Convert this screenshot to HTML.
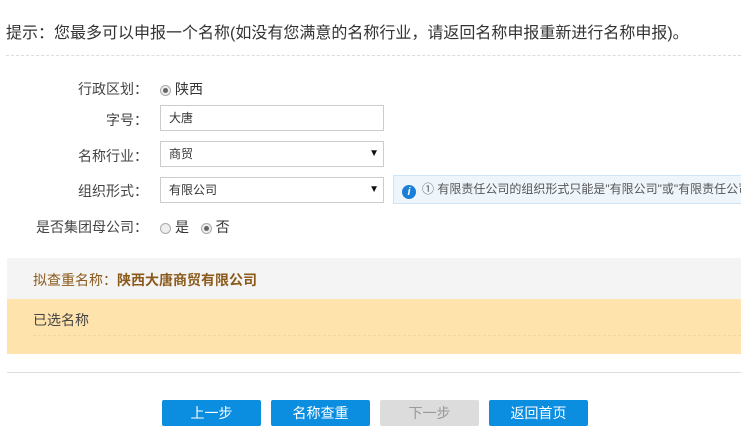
<!DOCTYPE html>
<html><head><meta charset="utf-8"><style>
body{margin:0;width:741px;height:447px;background:#fff;font-family:"Liberation Sans","Noto Sans CJK SC",sans-serif;color:#333;position:relative;overflow:hidden}
.a{position:absolute}
.lbl{position:absolute;right:593px;font-size:14px;color:#444;white-space:nowrap}
.box{position:absolute;left:160px;width:222px;height:24px;border:1px solid #ccc;background:#fff;font-size:12px;line-height:24px;padding-left:0}
.box .t{position:absolute;left:8px}
.arr{position:absolute;right:4px;top:0;font-size:10px;color:#111}
.rad{display:inline-block;width:9px;height:9px;border:1px solid #aaa;border-radius:50%;background:#eee;vertical-align:middle;position:relative;margin-right:4px}
.rad.on:after{content:"";position:absolute;left:2px;top:2px;width:5px;height:5px;border-radius:50%;background:#666}
.btn{position:absolute;top:400px;width:99px;height:26px;background:#0b8ee0;color:#fff;font-size:14px;text-align:center;line-height:26px;border-radius:2px}
</style></head><body>
<div class="a" style="left:6px;top:19px;font-size:16px;color:#333;white-space:nowrap">提示：您最多可以申报一个名称(如没有您满意的名称行业，请返回名称申报重新进行名称申报)。</div>
<div class="a" style="left:6px;top:55px;width:735px;border-top:1px dashed #ddd"></div>

<div class="lbl" style="top:79px">行政区划：</div>
<div class="a" style="left:160px;top:79px;font-size:14px"><span class="rad on"></span>陕西</div>
<div class="lbl" style="top:110px">字号：</div>
<div class="box" style="top:105px"><span class="t">大唐</span></div>
<div class="lbl" style="top:146px">名称行业：</div>
<div class="box" style="top:141px"><span class="t">商贸</span><span class="arr">▼</span></div>
<div class="lbl" style="top:181px">组织形式：</div>
<div class="box" style="top:177px"><span class="t">有限公司</span><span class="arr">▼</span></div>
<div class="a" style="left:393px;top:175px;width:350px;height:27px;background:#eef6fc;border:1px solid #cfe5f5;border-right:none;font-size:12px;line-height:27px;color:#555;white-space:nowrap;overflow:hidden">
<span style="display:inline-block;width:14px;height:14px;border-radius:50%;background:#1a7fd6;color:#fff;font-size:11px;font-style:italic;font-weight:bold;text-align:center;line-height:14px;margin:0 6px 0 8px;vertical-align:-2px">i</span>① 有限责任公司的组织形式只能是"有限公司"或"有限责任公司"</div>
<div class="lbl" style="top:217px">是否集团母公司：</div>
<div class="a" style="left:160px;top:217px;font-size:14px"><span class="rad"></span>是&nbsp;&nbsp;&nbsp;<span class="rad on"></span>否</div>

<div class="a" style="left:7px;top:258px;width:734px;height:41px;background:#f4f4f4"></div>
<div class="a" style="left:33px;top:270px;font-size:14px;color:#8b5a1b">拟查重名称：<b>陕西大唐商贸有限公司</b></div>
<div class="a" style="left:7px;top:299px;width:734px;height:55px;background:#fee4ac"></div>
<div class="a" style="left:33px;top:310px;font-size:14px;color:#444">已选名称</div>
<div class="a" style="left:33px;top:335px;width:708px;border-top:1px dashed #eed9a6"></div>
<div class="a" style="left:7px;top:372px;width:734px;border-top:1px solid #ddd"></div>

<div class="btn" style="left:162px">上一步</div>
<div class="btn" style="left:271px">名称查重</div>
<div class="btn" style="left:380px;background:#dcdcdc;color:#999">下一步</div>
<div class="btn" style="left:489px">返回首页</div>
</body></html>
